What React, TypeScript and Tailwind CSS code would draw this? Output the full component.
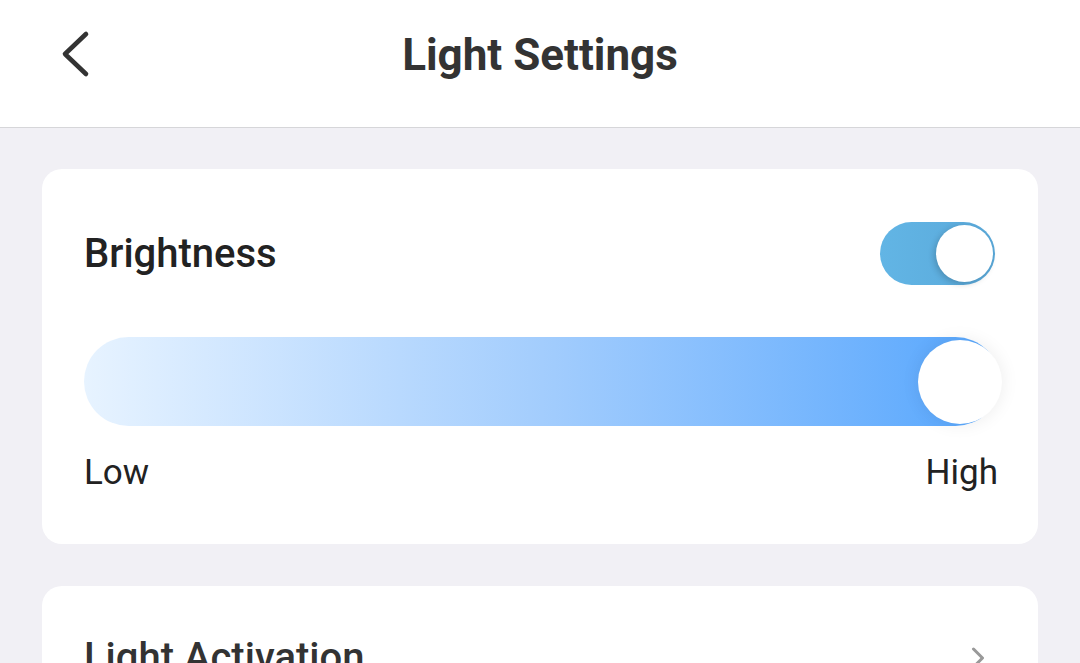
import { ChevronRight } from 'lucide-react'

export default function App() {
  return (
    <div className="h-[663px] w-[1080px] overflow-hidden bg-[#f1f0f5] font-['Roboto',sans-serif]">
      {/* header */}
      <div className="relative flex h-[128px] items-center justify-center border-b border-[#d6d6d9] bg-white">
        <button className="absolute left-[58px] top-[29px] text-[#333]">
          <svg width="36" height="50" viewBox="0 0 36 50" fill="none" stroke="currentColor" strokeWidth="4.6" strokeLinecap="round" strokeLinejoin="round">
            <polyline points="28,5 7,25 28,45" />
          </svg>
        </button>
        <h1 className="-mt-[18px] text-[44px] font-bold text-[#333]">Light Settings</h1>
      </div>

      <div className="flex flex-col gap-[42px] px-[42px] pt-[41px]">
        {/* brightness card */}
        <div className="rounded-[20px] bg-white px-[42px] pb-[54px] pt-[53px]">
          <div className="flex items-center justify-between">
            <span className="text-[40px] font-medium leading-none text-[#222]">Brightness</span>
            <div className="relative mr-[1px] h-[63px] w-[115px] rounded-full bg-gradient-to-r from-[#62b5e5] to-[#5aa9da]">
              <div className="absolute right-[2px] top-[3px] h-[57px] w-[57px] rounded-full bg-white shadow-[-2px_2px_6px_rgba(0,0,0,0.18)]" />
            </div>
          </div>

          <div className="relative mt-[52px] h-[89px] w-[916px] rounded-full bg-gradient-to-r from-[#e7f3ff] via-[#a3cdfd] to-[#55a6fd]">
            <div className="absolute right-[-2px] top-[3px] h-[84px] w-[84px] rounded-full bg-white shadow-[0_0_18px_rgba(0,0,0,0.08)]" />
          </div>

          <div className="mt-[29px] flex justify-between text-[35px] leading-none text-[#222]">
            <span>Low</span>
            <span className="-mr-[2px]">High</span>
          </div>
        </div>

        {/* light activation card */}
        <div className="flex items-center justify-between rounded-[20px] bg-white px-[42px] pt-[52px] pb-[40px]">
          <span className="text-[40px] font-medium leading-none text-[#333]">Light Activation</span>
          <ChevronRight size={36} strokeWidth={2} className="text-[#999]" />
        </div>
      </div>
    </div>
  )
}
